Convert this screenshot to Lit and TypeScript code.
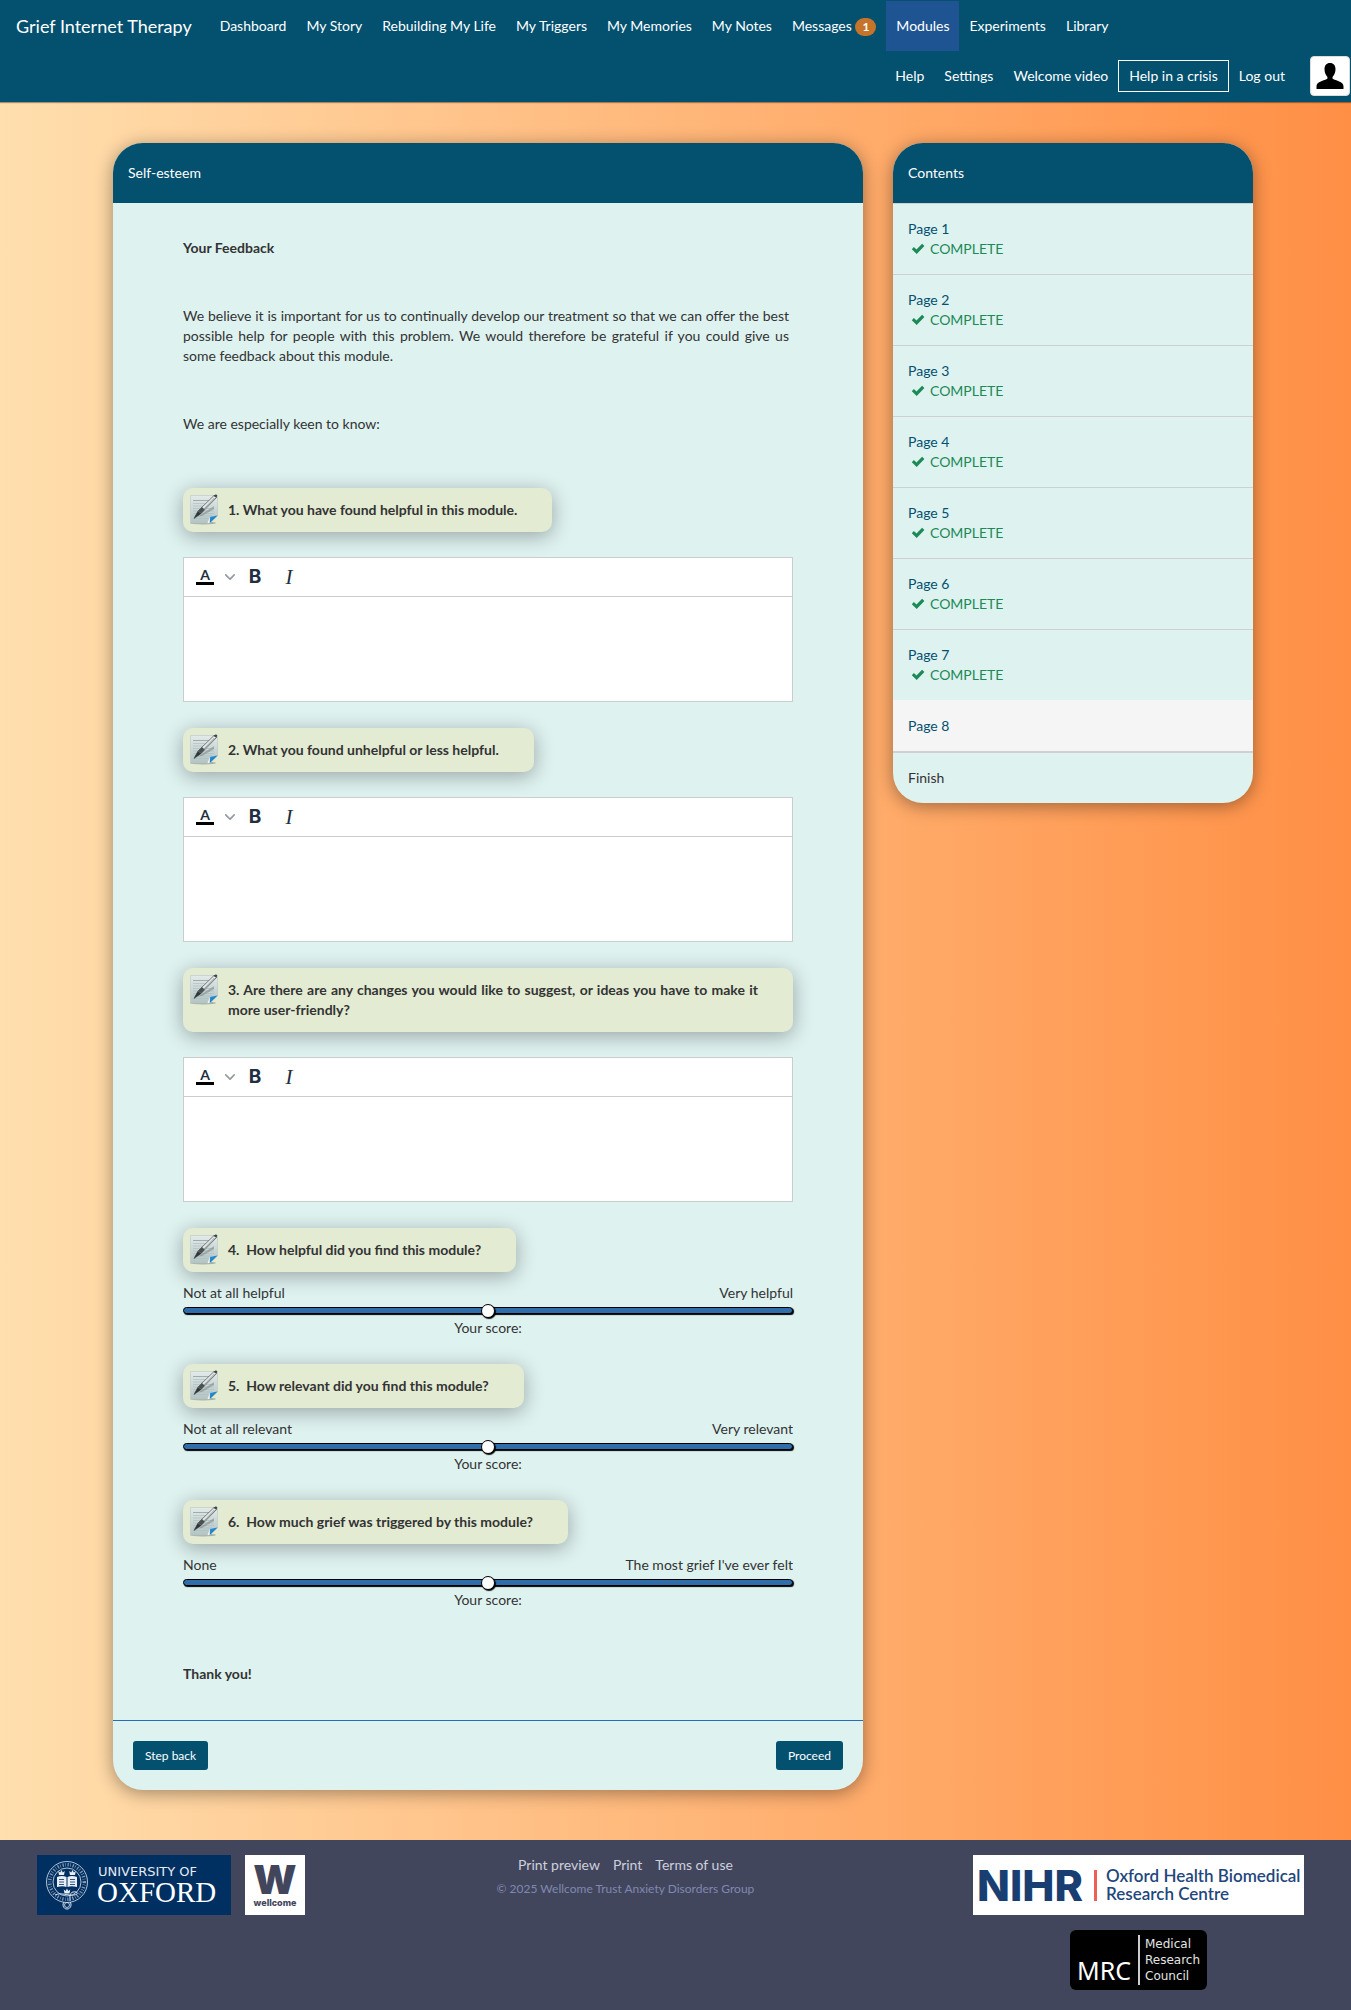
import { LitElement, html, css, svg, nothing } from "lit";
import { customElement, property } from "lit/decorators.js";

interface NavItem {
  label: string;
  badge?: number;
  active?: boolean;
  boxed?: boolean;
}

interface ScaleQuestion {
  id: string;
  title: string;
  low: string;
  high: string;
}

const MAIN_NAV: NavItem[] = [
  { label: "Dashboard" },
  { label: "My Story" },
  { label: "Rebuilding My Life" },
  { label: "My Triggers" },
  { label: "My Memories" },
  { label: "My Notes" },
  { label: "Messages", badge: 1 },
  { label: "Modules", active: true },
  { label: "Experiments" },
  { label: "Library" },
];

const USER_NAV: NavItem[] = [
  { label: "Help" },
  { label: "Settings" },
  { label: "Welcome video" },
  { label: "Help in a crisis", boxed: true },
  { label: "Log out" },
];

const TEXT_QUESTIONS = [
  { id: "q1", title: "1. What you have found helpful in this module." },
  { id: "q2", title: "2. What you found unhelpful or less helpful." },
  {
    id: "q3",
    title:
      "3. Are there are any changes you would like to suggest, or ideas you have to make it more user-friendly?",
  },
];

const SCALE_QUESTIONS: ScaleQuestion[] = [
  {
    id: "q4",
    title: "4.\u00a0 How helpful did you find this module?",
    low: "Not at all helpful",
    high: "Very helpful",
  },
  {
    id: "q5",
    title: "5.\u00a0 How relevant did you find this module?",
    low: "Not at all relevant",
    high: "Very relevant",
  },
  {
    id: "q6",
    title: "6.\u00a0 How much grief was triggered by this module?",
    low: "None",
    high: "The most grief I've ever felt",
  },
];

const COMPLETED_PAGES = [1, 2, 3, 4, 5, 6, 7];

@customElement("site-nav")
class SiteNav extends LitElement {
  static styles = css`
    :host {
      display: block;
      position: relative;
      background: #03506f;
      color: #fff;
      box-shadow: 0 1px 1px rgba(0, 0, 0, 0.35);
    }
    nav {
      padding: 1px 0;
    }
    .row {
      display: flex;
      align-items: center;
      height: 50px;
    }
    .row-user {
      justify-content: flex-end;
      padding-right: 1px;
    }
    ul {
      display: flex;
      align-items: center;
      list-style: none;
      margin: 0;
      padding: 0;
    }
    a {
      color: inherit;
      text-decoration: none;
      white-space: nowrap;
    }
    .brand {
      padding: 0 18px 0 16px;
      font-size: 18px;
    }
    .link {
      display: block;
      padding: 15px 10px;
    }
    .active {
      background: #1f5493;
    }
    .boxed {
      padding: 5px 10px;
      border: 1px solid #fff;
    }
    .badge {
      display: inline-block;
      padding: 0 7px;
      border-radius: 9px;
      background: #c57429;
      font-size: 12px;
      font-weight: 700;
      line-height: 18px;
    }
    .avatar {
      display: block;
      box-sizing: border-box;
      width: 40px;
      height: 40px;
      margin-left: 15px;
      padding: 4px;
      border: 1px solid #ddd;
      border-radius: 4px;
      background: #fff;
    }
    .avatar svg {
      display: block;
    }
  `;

  private item(item: NavItem) {
    const kind = item.active ? "active" : item.boxed ? "boxed" : "";
    return html`<li>
      <a class="link ${kind}" href="#" aria-current=${item.active ? "page" : nothing}
        >${item.label}${item.badge
          ? html` <span class="badge">${item.badge}</span>`
          : nothing}</a
      >
    </li>`;
  }

  render() {
    return html`<nav>
      <div class="row">
        <a class="brand" href="#">Grief Internet Therapy</a>
        <ul>
          ${MAIN_NAV.map((i) => this.item(i))}
        </ul>
      </div>
      <div class="row row-user">
        <ul>
          ${USER_NAV.map((i) => this.item(i))}
        </ul>
        <a class="avatar" href="#" aria-label="Profile">
          <svg width="30" height="30" viewBox="0 0 30 30" aria-hidden="true">
            <path
              d="M15 2c-3.600 0-5.500 2.600-5.500 6 0 3.400 1 5.700 2.600 7.400.5.500.6 2.200-.2 2.700C8 20 1.500 21 1.500 25.500V28h27v-2.500c0-4.500-6.500-5.500-10.400-7.400-.8-.5-.7-2.200-.2-2.700 1.600-1.700 2.600-4 2.600-7.400 0-3.400-1.900-6-5.500-6z"
            />
          </svg>
        </a>
      </div>
    </nav>`;
  }
}

@customElement("question-label")
class QuestionLabel extends LitElement {
  @property() text = "";

  static styles = css`
    :host {
      display: flex;
      align-items: flex-start;
      box-sizing: border-box;
      width: fit-content;
      max-width: 100%;
      padding: 6px 35px 6px 7px;
      border-radius: 10px;
      background: #e3ebd3;
      box-shadow: 0 4px 20px rgba(0, 0, 0, 0.32);
      font-weight: 700;
    }
    svg {
      flex: none;
      margin-right: 10px;
    }
    .text {
      padding: 6px 0;
      text-align: justify;
    }
  `;

  render() {
    return html`<svg width="28" height="32" viewBox="0 0 28 32" aria-hidden="true">
        <defs>
          <linearGradient id="sheet" x1="0" y1="0" x2="0" y2="1">
            <stop offset="0" stop-color="#e4eaea" />
            <stop offset="1" stop-color="#b3c4c5" />
          </linearGradient>
          <linearGradient id="fold" x1="0" y1="0" x2="1" y2="1">
            <stop offset="0" stop-color="#2f9fe2" />
            <stop offset="1" stop-color="#0a5ea6" />
          </linearGradient>
        </defs>
        <ellipse cx="13" cy="29" rx="13" ry="1.500" fill="#7f8b86" opacity=".6" />
        <path d="M0.500 1.500H27.500V22L20 29H0.500z" fill="url(#sheet)" stroke="#b9c6c6" stroke-width=".6" />
        <path d="M3 6.500h18" stroke="#98a5a5" stroke-width=".9" />
        <path
          d="M3 9.500h16M3 12h15M3 14.500h21M3 17h21M3 19.500h21M3 22h19M3 24.500h15"
          stroke="#a9babb"
          stroke-width=".6"
        />
        <path d="M8 22.500L24 12v3L12 22z" fill="#6d7878" opacity=".45" />
        <path d="M27.500 21.500l-7.500 1.500-.5 6.200z" fill="url(#fold)" />
        <path d="M20 23l-2.500 6h2z" fill="#f3f8f8" />
        <path d="M4 24.500l4-7.500L24 1.500l2.500 2L11 19.500z" fill="#e3e8e8" stroke="#59615f" stroke-width=".8" />
        <path d="M11.500 17.500L24.500 4" stroke="#929c9b" stroke-width="1" />
        <path d="M4 24.500l4-7.500 3.200 2.600z" fill="#2f3534" />
        <path d="M8 17l4-4 2.800 2.800-3.600 3.800z" fill="#4a5251" />
        <path d="M23.500 1.800L26 .2l1.300 1.200-.9 2.400z" fill="#3f4645" />
      </svg>
      <span class="text">${this.text}</span>`;
  }
}

@customElement("text-editor")
class TextEditor extends LitElement {
  @property() label = "";

  static styles = css`
    :host {
      display: flex;
      flex-direction: column;
      box-sizing: border-box;
      height: 145px;
      border: 1px solid #ccc;
      background: #fff;
    }
    .toolbar {
      display: flex;
      align-items: stretch;
      height: 38px;
      padding-left: 4px;
      border-bottom: 1px solid #ccc;
    }
    button {
      display: flex;
      flex-direction: column;
      align-items: center;
      justify-content: center;
      width: 34px;
      padding: 0;
      border: 0;
      background: none;
      color: #222f3e;
      line-height: 20px;
    }
    .colour {
      font: 700 14px/12px Lato, sans-serif;
    }
    .swatch {
      width: 18px;
      height: 3px;
      margin-top: 1px;
      background: #000;
    }
    .menu {
      width: 16px;
    }
    .bold {
      font: 700 19px/20px Inter, sans-serif;
    }
    .italic {
      font: italic 400 21px/20px "Liberation Serif", serif;
    }
    textarea {
      flex: 1;
      box-sizing: border-box;
      width: 100%;
      padding: 8px;
      border: 0;
      outline: 0;
      resize: none;
      background: none;
      color: #333;
      font: inherit;
    }
  `;

  render() {
    return html`<div class="toolbar">
        <button type="button" class="colour" aria-label="Text colour">
          A<span class="swatch"></span>
        </button>
        <button type="button" class="menu" aria-label="Text colour menu">
          <svg width="10" height="10" viewBox="0 0 10 10" aria-hidden="true">
            <path
              fill="#9298a0"
              d="M8.700 2.200c.3-.3.8-.3 1 0 .4.400.4.900 0 1.200L5.700 7.800c-.3.300-.9.300-1.200 0L.2 3.400a.8.800 0 010-1.200c.3-.3.8-.3 1.100 0L5 6l3.700-3.800z"
            />
          </svg>
        </button>
        <button type="button" class="bold" aria-label="Bold">B</button>
        <button type="button" class="italic" aria-label="Italic">I</button>
      </div>
      <textarea aria-label=${this.label}></textarea>`;
  }
}

@customElement("score-slider")
class ScoreSlider extends LitElement {
  @property() name = "";
  @property() label = "";
  @property() low = "";
  @property() high = "";

  static styles = css`
    :host {
      display: block;
    }
    .ends {
      display: flex;
      justify-content: space-between;
    }
    input {
      -webkit-appearance: none;
      appearance: none;
      display: block;
      width: 100%;
      height: 15px;
      margin: 0;
      background: none;
    }
    input::-webkit-slider-runnable-track {
      box-sizing: border-box;
      height: 7px;
      border: 1px solid #000;
      border-radius: 4px;
      background: #2f6eab;
      box-shadow: 1px 1px 1px #000;
    }
    input::-webkit-slider-thumb {
      -webkit-appearance: none;
      box-sizing: border-box;
      width: 14px;
      height: 14px;
      margin-top: -4px;
      border: 1px solid #000;
      border-radius: 7px;
      background: #fff;
      box-shadow: 1px 1px 1px #000;
    }
    .score {
      display: block;
      text-align: center;
    }
  `;

  render() {
    return html`<div class="ends"><span>${this.low}</span><span>${this.high}</span></div>
      <input id=${this.name} type="range" min="0" max="100" value="50" aria-label=${this.label} />
      <label class="score" for=${this.name}>Your score:</label>`;
  }
}

@customElement("feedback-card")
class FeedbackCard extends LitElement {
  static styles = css`
    :host {
      display: block;
      border-radius: 30px;
      background: #def2f0;
      box-shadow: 0 3px 18px rgba(0, 0, 0, 0.38);
      overflow: hidden;
    }
    h1 {
      margin: 0;
      padding: 20px 15px;
      background: #03506f;
      color: #fff;
      font-size: 14px;
      font-weight: 400;
    }
    .body {
      padding: 35px 70px 36px;
    }
    h2,
    .thanks {
      margin: 0;
      font-size: 14px;
      font-weight: 700;
    }
    p {
      margin: 48px 4px 0 0;
      text-align: justify;
    }
    .questions {
      margin: 54px 0;
      display: flex;
      flex-direction: column;
      gap: 26px;
    }
    .open {
      display: flex;
      flex-direction: column;
      gap: 25px;
    }
    .scale {
      display: flex;
      flex-direction: column;
      gap: 11px;
    }
    footer {
      display: flex;
      justify-content: space-between;
      padding: 20px;
      border-top: 1px solid #1f6fc0;
    }
    button {
      height: 29px;
      padding: 0 12px;
      border: 0;
      border-radius: 3px;
      background: #03506f;
      color: #fff;
      font: 12px/18px Lato, sans-serif;
    }
  `;

  render() {
    return html`<h1>Self-esteem</h1>
      <div class="body">
        <h2>Your Feedback</h2>
        <p>
          We believe it is important for us to continually develop our treatment so that we can
          offer the best possible help for people with this problem. We would therefore be grateful
          if you could give us some feedback about this module.
        </p>
        <p>We are especially keen to know:</p>
        <div class="questions">
          ${TEXT_QUESTIONS.map(
            (q) => html`<div class="open">
              <question-label .text=${q.title}></question-label>
              <text-editor .label=${q.title}></text-editor>
            </div>`
          )}
          ${SCALE_QUESTIONS.map(
            (q) => html`<div class="scale">
              <question-label .text=${q.title}></question-label>
              <score-slider .name=${q.id} .label=${q.title} .low=${q.low} .high=${q.high}>
              </score-slider>
            </div>`
          )}
        </div>
        <div class="thanks">Thank you!</div>
      </div>
      <footer>
        <button type="button">Step back</button>
        <button type="button">Proceed</button>
      </footer>`;
  }
}

@customElement("contents-card")
class ContentsCard extends LitElement {
  static styles = css`
    :host {
      display: block;
      border-radius: 30px;
      background: #def2f0;
      box-shadow: 0 3px 18px rgba(0, 0, 0, 0.38);
      overflow: hidden;
    }
    h2 {
      margin: 0;
      padding: 20px 15px;
      background: #03506f;
      color: #fff;
      font-size: 14px;
      font-weight: 400;
    }
    ul {
      list-style: none;
      margin: 0;
      padding: 0;
    }
    li {
      padding: 15px;
      border-top: 1px solid #d0d0d2;
    }
    .current {
      border-top-color: #f5f5f5;
      border-bottom: 1px solid #d0d0d2;
      background: #f5f5f5;
    }
    a {
      display: block;
      color: #03506f;
      text-decoration: none;
    }
    .state {
      display: flex;
      align-items: center;
      gap: 5px;
      padding-left: 3px;
      color: #1c8a56;
    }
  `;

  render() {
    return html`<h2>Contents</h2>
      <ul>
        ${COMPLETED_PAGES.map(
          (n) => html`<li>
            <a href="#">Page ${n}</a>
            <div class="state">
              <svg width="14" height="12" viewBox="0 0 14 12" aria-hidden="true">
                <path
                  d="M.8 6.200L2.900 4l2.600 2.400L11.100.8l2.300 2.200-7.700 7.900z"
                  fill="currentColor"
                />
              </svg>
              <span>COMPLETE</span>
            </div>
          </li>`
        )}
        <li class="current"><a href="#" aria-current="page">Page 8</a></li>
        <li>Finish</li>
      </ul>`;
  }
}

const oxfordLogo = svg`
  <rect width="194" height="60" fill="#002f62" />
  <g fill="none" stroke="#dfe7f1">
    <circle cx="30" cy="27" r="20.500" stroke-width=".8" />
    <circle cx="30" cy="27" r="14" stroke-width=".8" />
    <circle cx="30" cy="27" r="17.300" stroke-width="3.600" stroke-dasharray="1.200 1.500 .6 1.800" opacity=".6" />
    <path d="M18 40c6-3 13 1 19 0s3-4-1-3-3 6-3 9M27 47c-2 2-1 7 3 7s5-5 3-7" stroke-width="1" />
    <circle cx="30" cy="50" r="2.500" stroke-width=".8" />
  </g>
  <path d="M20 22c4-1.500 7-1 9.500 0v10c-2.500-1-5.500-1-9.500 0zM30.500 22c2.500-1 5.500-1.500 9.500 0v10c-4-1-7-1-9.500 0z" fill="#e8eef5" />
  <path d="M22 24.500h5M22 27h5M22 29.500h5M33 24.500h5M33 27h5M33 29.500h5" stroke="#002f62" stroke-width=".8" />
  <path d="M22 20l-.8-4 2 1.500L24.500 15l1.300 2.500 2-1.500-.8 4zM33 20l-.8-4 2 1.500 1.300-2.500 1.300 2.500 2-1.500-.8 4zM27.500 38.500l-.8-4 2 1.500 1.300-2.500 1.300 2.500 2-1.500-.8 4z" fill="#e8eef5" />
`;

@customElement("site-footer")
class SiteFooter extends LitElement {
  static styles = css`
    :host {
      display: grid;
      grid-template-columns: 13fr 24fr 17fr;
      align-items: start;
      padding: 15px 0 20px;
      background: #42465c;
    }
    svg {
      display: block;
    }
    .left {
      display: flex;
      gap: 14px;
      padding-left: 37px;
    }
    .middle {
      text-align: center;
      color: #8088b0;
      font-size: 12px;
    }
    .links {
      display: flex;
      justify-content: center;
      gap: 13px;
      margin-bottom: 4px;
      font-size: 14px;
    }
    a {
      color: #cdd0de;
      text-decoration: none;
    }
    .right {
      display: flex;
      flex-direction: column;
      align-items: center;
      gap: 15px;
    }
    .ox-small {
      font: 13px "DejaVu Sans", sans-serif;
      fill: #e6ecf4;
    }
    .ox-large {
      font: 29px "Liberation Serif", serif;
      fill: #fff;
    }
    .w-large {
      font: 900 40px Inter, sans-serif;
      fill: #42465c;
    }
    .w-small {
      font: 800 9px Inter, sans-serif;
      fill: #42465c;
    }
    .nihr-large {
      font: 800 43px Inter, sans-serif;
      fill: #193e72;
    }
    .nihr-small {
      font: 600 17px Lato, sans-serif;
      fill: #1f477c;
    }
    .mrc-large {
      font: 25px "Noto Sans", sans-serif;
      fill: #fff;
    }
    .mrc-small {
      font: 12px "DejaVu Sans", sans-serif;
      fill: #e4e4e4;
    }
  `;

  render() {
    return html`<div class="left">
        <svg width="194" height="60" viewBox="0 0 194 60" role="img" aria-label="University of Oxford">
          ${oxfordLogo}
          <text class="ox-small" x="61" y="21">UNIVERSITY OF</text>
          <text class="ox-large" x="60" y="47">OXFORD</text>
        </svg>
        <svg width="60" height="60" viewBox="0 0 60 60" role="img" aria-label="Wellcome">
          <rect width="60" height="60" fill="#fff" />
          <text class="w-large" x="30" y="39" text-anchor="middle">W</text>
          <text class="w-small" x="30" y="51" text-anchor="middle">wellcome</text>
        </svg>
      </div>
      <div class="middle">
        <div class="links">
          <a href="#">Print preview</a><a href="#">Print</a><a href="#">Terms of use</a>
        </div>
        © 2025 Wellcome Trust Anxiety Disorders Group
      </div>
      <div class="right">
        <svg width="331" height="60" viewBox="0 0 331 60" role="img" aria-label="NIHR Oxford Health Biomedical Research Centre">
          <rect width="331" height="60" fill="#fff" />
          <text class="nihr-large" x="4" y="46">NIHR</text>
          <rect x="121" y="15" width="3" height="31" fill="#ee5f56" />
          <text class="nihr-small" x="133" y="27">Oxford Health Biomedical</text>
          <text class="nihr-small" x="133" y="45">Research Centre</text>
        </svg>
        <svg width="137" height="60" viewBox="0 0 137 60" role="img" aria-label="MRC Medical Research Council">
          <rect width="137" height="60" rx="6" fill="#000" />
          <text class="mrc-large" x="7" y="50">MRC</text>
          <rect x="68" y="5" width="2" height="50" fill="#ccc" />
          <text class="mrc-small" x="75" y="18">Medical</text>
          <text class="mrc-small" x="75" y="34">Research</text>
          <text class="mrc-small" x="75" y="50">Council</text>
        </svg>
      </div>`;
  }
}

@customElement("app-root")
class AppRoot extends LitElement {
  static styles = css`
    :host {
      display: flex;
      flex-direction: column;
      min-height: 100vh;
      background: linear-gradient(to right, #ffdfae, #ff8f45);
      color: #333;
      font: 14px/20px Lato, sans-serif;
    }
    main {
      flex: 1;
      display: grid;
      grid-template-columns: 25fr 12fr;
      align-items: start;
      gap: 30px;
      box-sizing: border-box;
      width: 100%;
      max-width: 1155px;
      margin: 0 auto;
      padding: 41px 0 50px 15px;
    }
  `;

  render() {
    return html`<site-nav></site-nav>
      <main>
        <feedback-card></feedback-card>
        <contents-card></contents-card>
      </main>
      <site-footer></site-footer>`;
  }
}
